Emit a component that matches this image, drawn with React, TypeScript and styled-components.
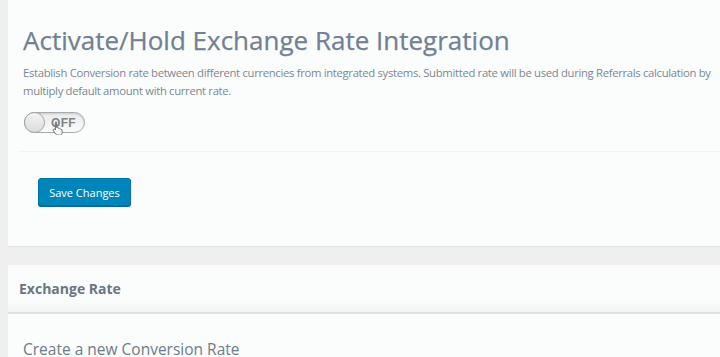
import * as React from 'react';
import styled, { createGlobalStyle } from 'styled-components';

const GlobalStyle = createGlobalStyle`
    html, body {
        margin: 0;
        padding: 0;
        background: #eeefee;
        font-family: "Open Sans", "Noto Sans", sans-serif;
        overflow: hidden;
    }
`;

const Page = styled.div`
    padding-left: 8px;
    height: 357px;
    display: flex;
    flex-direction: column;
    gap: 18px;
`;

const Panel = styled.section`
    background: #fafdfb;
    border-bottom: 1px solid #e2e4e2;
`;

const SettingsBody = styled.div`
    padding: 22px 0 40px 15px;
`;

const Title = styled.h1`
    margin: 0;
    font-size: 26px;
    font-weight: 400;
    color: #718093;
    line-height: 36px;
    white-space: nowrap;
    -webkit-text-stroke: 0.25px #718093;
`;

const Description = styled.p`
    margin: 6px 0 0;
    font-size: 11.3px;
    line-height: 17.5px;
    letter-spacing: -0.32px;
    color: #7d8794;
    white-space: nowrap;
`;

const Row = styled.div`
    padding: 13px 0 18px;
    border-bottom: 1px solid #f1f4f2;
    margin-left: -5px;
    padding-left: 6px;
`;

const Toggle = styled.div`
    position: relative;
    height: 19px;
    width: 51px;
    border: 1px solid #a8aaac;
    border-radius: 11px;
    background: linear-gradient(#eaebec, #fafafa);
    box-shadow: inset 0 1px 2px rgba(0, 0, 0, 0.15);
    display: flex;
    align-items: center;
    justify-content: flex-end;
    padding-right: 8px;
    box-sizing: content-box;
`;

const Knob = styled.span`
    position: absolute;
    left: -1px;
    top: -1px;
    width: 19px;
    height: 19px;
    border-radius: 50%;
    border: 1px solid #a0a3a6;
    background: linear-gradient(#f4f4f4, #dcdcdc);
`;

const ToggleText = styled.span`
    font-family: "Liberation Sans", Arial, sans-serif;
    font-size: 12px;
    font-weight: 700;
    color: #808386;
    letter-spacing: 0.3px;
`;

const Cursor = styled.svg`
    position: absolute;
    left: 27px;
    top: 8px;
`;

const Actions = styled.div`
    padding: 26px 0 0 15px;
`;

const PrimaryButton = styled.button`
    background: #0085ba;
    border: 1px solid #0073aa;
    border-radius: 3px;
    color: #fff;
    font-family: "Open Sans", sans-serif;
    font-size: 11px;
    height: 28px;
    width: 93px;
    padding: 0;
    box-shadow: 0 1px 0 #006799;
`;

const PanelHeader = styled.h2`
    margin: 0;
    height: 47px;
    display: flex;
    align-items: center;
    padding-left: 11px;
    font-size: 14px;
    font-weight: 700;
    color: #6b7684;
    background: linear-gradient(#fafdfb 70%, #f3f5f3);
    border-bottom: 2px solid #dfe1df;
`;

const PanelBody = styled.div`
    padding: 24px 0 0 15px;
`;

const SubTitle = styled.h3`
    margin: 0;
    font-size: 15.5px;
    font-weight: 400;
    color: #6f7b88;
    white-space: nowrap;
`;

export default function App() {
    return (
        <>
            <GlobalStyle />
            <Page>
                <Panel>
                    <SettingsBody>
                        <Title>Activate/Hold Exchange Rate Integration</Title>
                        <Description>
                            Establish Conversion rate between different currencies from integrated systems. Submitted rate will be used during Referrals calculation by
                            <br />
                            multiply default amount with current rate.
                        </Description>
                        <Row>
                            <Toggle>
                                <Knob />
                                <ToggleText>OFF</ToggleText>
                                <Cursor width="12" height="14" viewBox="0 0 12 14">
                                    <path
                                        d="M3.5 1.2c.7 0 1.1.5 1.1 1.1v4.2l.4-.1c.6-.1 1 .2 1.1.6l.1.2c.6-.3 1.2 0 1.4.5.6-.2 1.2.1 1.3.7.6-.1 1.2.3 1.2 1v2.3c0 1.3-1 2.4-2.4 2.4H5.6c-.8 0-1.5-.4-1.9-1L1.3 9.6c-.4-.5-.3-1.1.2-1.4.5-.3 1-.2 1.4.2l.5.6V2.3c0-.6.4-1.1 1.1-1.1z"
                                        fill="#fff"
                                        stroke="#5a5f66"
                                        strokeWidth="0.9"
                                    />
                                </Cursor>
                            </Toggle>
                        </Row>
                        <Actions>
                            <PrimaryButton>Save Changes</PrimaryButton>
                        </Actions>
                    </SettingsBody>
                </Panel>
                <Panel>
                    <PanelHeader>Exchange Rate</PanelHeader>
                    <PanelBody>
                        <SubTitle>Create a new Conversion Rate</SubTitle>
                    </PanelBody>
                </Panel>
            </Page>
        </>
    );
}
